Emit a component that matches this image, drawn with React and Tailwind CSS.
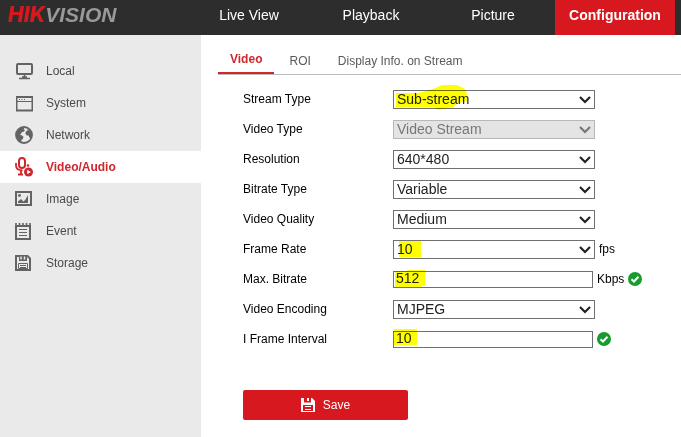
import React, { useState } from "react";

const NAV = ["Live View", "Playback", "Picture", "Configuration"];
const TABS = ["Video", "ROI", "Display Info. on Stream"];

function LocalIcon() {
  return (
    <svg width="18" height="18" viewBox="0 0 18 18" fill="none" stroke="currentColor" strokeWidth="2">
      <rect x="2" y="2" width="15" height="10" rx="1" />
      <path d="M9.5 12v4M7 15h5M4 16.500h11" strokeWidth="1.500" />
    </svg>
  );
}

function SystemIcon() {
  return (
    <svg width="18" height="18" viewBox="0 0 18 18" fill="none" stroke="currentColor">
      <path d="M1 3h17M1 16.500h17" strokeWidth="2" />
      <path d="M1.750 2v15M17.250 2v15" strokeWidth="1.500" />
      <path d="M2 7.500h15" />
      <path d="M4 5.500h1M6.500 5.500h1M9 5.500h1" />
    </svg>
  );
}

function NetworkIcon() {
  return (
    <svg width="18" height="18" viewBox="0 0 18 18">
      <circle cx="9" cy="9" r="8" fill="none" stroke="currentColor" strokeWidth="1.800" />
      <path
        d="M1.500 7.500 4 3l3.500-2 2 .6-.8 1.600 1.300 1-1.500 1.600-1.800.4-.7 1.800-1.500.4 2.200.8 1.800 1.500-.6 2.200-1.300.9-.4 2.700L4 15l-2.500-4z"
        fill="currentColor"
      />
      <path d="M12 3.200 15 4.500l1.800 4-.6 4-1.800-.8-.6-2-2.300-.5-1.200-2 .8-2 1.600-.6z" fill="currentColor" />
    </svg>
  );
}

function VideoAudioIcon() {
  return (
    <svg width="18" height="20" viewBox="0 0 18 20" fill="none" stroke="currentColor">
      <rect x="4" y="1" width="6" height="10" rx="3" strokeWidth="2" />
      <path d="M1 6v2.500c0 3.300 2 4.700 6.500 5" strokeWidth="1.800" />
      <path d="M6 13.500v4M3 17.500h5" strokeWidth="1.800" />
      <circle cx="13" cy="8.500" r="1.300" fill="currentColor" stroke="none" />
      <circle cx="13.500" cy="15" r="4.500" fill="currentColor" stroke="none" />
      <path d="M12.200 12.700v4.600l3.600-2.300z" fill="#fff" stroke="none" />
    </svg>
  );
}

function ImageIcon() {
  return (
    <svg width="18" height="18" viewBox="0 0 18 18">
      <rect x="1" y="2" width="15" height="13" fill="none" stroke="currentColor" strokeWidth="2" />
      <circle cx="4.500" cy="5.500" r="1.400" fill="currentColor" />
      <path d="M3 13v-1.500L6 9l2.500 2.500V13zM8.500 11.500l2-2L13 5v8H8.500z" fill="currentColor" />
    </svg>
  );
}

function EventIcon() {
  return (
    <svg width="18" height="18" viewBox="0 0 18 18" fill="none" stroke="currentColor">
      <rect x="1" y="4" width="14" height="13" strokeWidth="2" />
      <path d="M1 1v3M4.500 1v3M8 1v3M11.500 1v3M15 1v3" strokeWidth="1.600" />
      <path d="M4 7.500h8M4 10.500h8M4 13.500h8" />
    </svg>
  );
}

function StorageIcon() {
  return (
    <svg width="18" height="18" viewBox="0 0 18 18" fill="none" stroke="currentColor">
      <path d="M1 2h11.500L15 4.500V16H1z" strokeWidth="2" />
      <path d="M4 2h8v5H4z" fill="currentColor" stroke="none" />
      <path d="M6 2.500v3M9.500 2.500v3" className="stroke-[#eaeaea]" strokeWidth="1.500" />
      <path d="M3.500 9.500h9v5h-9zM5 11.500h6M5 13.500h6" />
    </svg>
  );
}

function SaveIcon() {
  return (
    <svg width="14" height="14" viewBox="0 0 14 14">
      <path d="M0 0h11l3 3v11H0z" fill="#fff" />
      <path d="M3 0h7v4.500H3zM2 7h10v6H2z" fill="#d7191f" />
      <path d="M6 0h2v3H6zM4 8h6v1H4zM4 11h6v1H4z" fill="#fff" />
    </svg>
  );
}

function Tick() {
  return (
    <svg width="14" height="14" viewBox="0 0 14 14" aria-hidden="true">
      <circle cx="7" cy="7" r="7" fill="#179b2e" />
      <path d="M3.500 7.200 6 9.500l4.500-4.800" fill="none" stroke="#fff" strokeWidth="2" />
    </svg>
  );
}

const MENU = [
  { name: "Local", icon: LocalIcon },
  { name: "System", icon: SystemIcon },
  { name: "Network", icon: NetworkIcon },
  { name: "Video/Audio", icon: VideoAudioIcon },
  { name: "Image", icon: ImageIcon },
  { name: "Event", icon: EventIcon },
  { name: "Storage", icon: StorageIcon },
];

// yellow marker strokes, drawn in the field's own coordinates
const FIELDS = [
  {
    id: "streamType",
    label: "Stream Type",
    options: ["Sub-stream", "Main Stream(Normal)"],
    mark: "M3 3h22l15-4 9-4h15l8 4 2 5v7l-9 2-5 4-15 3-4-3H3z",
  },
  { id: "videoType", label: "Video Type", options: ["Video Stream"], disabled: true },
  { id: "resolution", label: "Resolution", options: ["640*480", "352*288"] },
  { id: "bitrateType", label: "Bitrate Type", options: ["Variable", "Constant"] },
  { id: "quality", label: "Video Quality", options: ["Medium", "Higher", "Highest"] },
  { id: "frameRate", label: "Frame Rate", options: ["10", "15", "20"], unit: "fps", mark: "M6 1h22v16H6z" },
  { id: "maxBitrate", label: "Max. Bitrate", value: "512", unit: "Kbps", valid: true, mark: "M2 0h12v-1h18v16h-4v1H2z" },
  { id: "encoding", label: "Video Encoding", options: ["MJPEG", "H.264"] },
  { id: "iFrame", label: "I Frame Interval", value: "10", valid: true, mark: "M1-2h23v16H1z" },
];

function Field({ field }) {
  const { id, label, options, value, disabled, unit, valid, mark } = field;

  return (
    <div className="flex h-[30px] items-center">
      <label htmlFor={id} className="w-[150px] shrink-0 text-black">
        {label}
      </label>
      <div className="relative flex">
        {options ? (
          <>
            <select
              id={id}
              disabled={disabled}
              className="h-[19px] w-[202px] appearance-none border border-[#707070] bg-white pl-[3px] text-sm leading-4 text-[#222] disabled:border-[#b8b8b8] disabled:bg-[#e4e4e4] disabled:text-[#777] disabled:opacity-100"
            >
              {options.map((o) => (
                <option key={o}>{o}</option>
              ))}
            </select>
            <svg
              width="12"
              height="8"
              viewBox="0 0 12 8"
              className={`pointer-events-none absolute right-1 top-1.5 ${disabled ? "text-[#777]" : "text-[#222]"}`}
            >
              <path d="M1 1l5 5 5-5" fill="none" stroke="currentColor" strokeWidth="2.200" />
            </svg>
          </>
        ) : (
          <input
            id={id}
            type="text"
            defaultValue={value}
            className="h-[17px] w-[200px] border border-[#707070] bg-white px-0.5 pb-0.5 text-sm leading-4 text-[#222]"
          />
        )}
        {mark && (
          <svg
            width="80"
            height="20"
            className="pointer-events-none absolute left-0 top-0 overflow-visible mix-blend-multiply"
            aria-hidden="true"
          >
            <path d={mark} fill="#ffff00" />
          </svg>
        )}
      </div>
      <div className="flex items-center gap-1 pl-1 text-black">
        {unit && <span>{unit}</span>}
        {valid && <Tick />}
      </div>
    </div>
  );
}

export default function App() {
  const [page, setPage] = useState("Configuration");
  const [menu, setMenu] = useState("Video/Audio");
  const [tab, setTab] = useState("Video");

  return (
    <div className="flex min-h-screen flex-col bg-white font-['Liberation_Sans',Arial,sans-serif] text-xs">
      <header className="flex h-[35px] items-stretch justify-between bg-[#2d2d2d] pl-2 pr-1.5">
        <div className="flex items-center pb-1.5 text-[21px] font-bold italic leading-none text-[#999]">
          <span className="font-['Inter',sans-serif] font-extrabold text-[#d7191f]">HIK</span>
          <span>VISION</span>
        </div>
        <nav className="flex gap-0.5">
          {NAV.map((n) => (
            <button
              key={n}
              onClick={() => setPage(n)}
              className={`w-[120px] pb-1.5 text-sm text-white ${page === n ? "bg-[#d7191f] font-bold" : ""}`}
            >
              {n}
            </button>
          ))}
        </nav>
      </header>

      <div className="flex flex-1">
        <aside className="w-[201px] shrink-0 bg-[#eaeaea] pt-5">
          {MENU.map(({ name, icon: Icon }) => (
            <button
              key={name}
              onClick={() => setMenu(name)}
              className={`flex h-8 w-full items-center gap-[13px] pl-[15px] ${
                menu === name ? "bg-white font-bold text-[#cf272d]" : "text-[#4a4a4a]"
              }`}
            >
              <span className={menu === name ? "" : "text-[#636363]"}>
                <Icon />
              </span>
              {name}
            </button>
          ))}
        </aside>

        <main className="min-w-0 flex-1 pl-[17px]">
          <div className="flex h-10 items-stretch gap-[3px] border-b border-[#bbb]">
            {TABS.map((t) => (
              <button
                key={t}
                onClick={() => setTab(t)}
                className={`px-3 ${
                  tab === t
                    ? "border-b-2 border-[#cf272d] pt-2.5 font-bold text-[#cf272d]"
                    : "pt-3 text-[#5a5a5a]"
                }`}
              >
                {t}
              </button>
            ))}
          </div>

          <form className="pl-[25px] pt-[9px]" onSubmit={(e) => e.preventDefault()}>
            {FIELDS.map((f) => (
              <Field key={f.id} field={f} />
            ))}
            <button
              type="submit"
              className="mt-9 flex h-[30px] w-[165px] items-center justify-center gap-2 rounded-xs bg-[#d7191f] text-white"
            >
              <SaveIcon />
              Save
            </button>
          </form>
        </main>
      </div>
    </div>
  );
}
